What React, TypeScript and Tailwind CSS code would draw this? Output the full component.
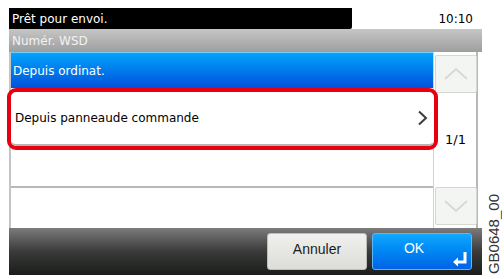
import React from "react";

// scroll arrow inside the side column
const ScrollButton = ({ dir }: { dir: "up" | "down" }) => (
  <div className="flex h-[38px] w-[42px] items-center justify-center rounded-[2px] border border-[#d4d8d4] bg-[#f3f5f3]">
    <svg width="26" height="14" viewBox="0 0 26 14">
      <path
        d={dir === "up" ? "M2 12 L13 2 L24 12" : "M2 2 L13 12 L24 2"}
        fill="none"
        stroke="#d6dad6"
        strokeWidth="2"
      />
    </svg>
  </div>
);

const App = () => {
  const sans = { fontFamily: '"DejaVu Sans", Verdana, sans-serif' };
  const arial = { fontFamily: '"Liberation Sans", Arial, sans-serif' };

  return (
    <div className="flex h-[279px] w-[504px] bg-white pl-[9px] pt-[8px]">
      {/* main panel */}
      <div className="flex w-[473px] flex-col text-[12px]" style={sans}>
        {/* status line */}
        <div className="flex h-[21px]">
          <div className="flex w-[343px] items-center rounded-br-[2px] bg-black pl-[3px] text-white">
            Prêt pour envoi.
          </div>
          <div className="flex flex-1 items-center justify-end pr-[9px] text-black">10:10</div>
        </div>

        {/* title bar */}
        <div className="flex h-[23px] items-center bg-gradient-to-b from-[#c6c6c6] to-[#9e9e9e] pl-[3px] text-[#f2f2f2]">
          Numér. WSD
        </div>

        {/* list + scroll column */}
        <div className="flex h-[176px] w-[469px]">
          <div className="flex w-[424px] flex-col border-l-2 border-[#c4c4c4]">
            <div className="flex h-[36px] items-center border-t border-[#6cd0ff] bg-gradient-to-b from-[#0aa2fb] to-[#0050dc] pl-[2px] text-white">
              Depuis ordinat.
            </div>

            <div className="relative z-10 -ml-[4px] -mr-[5px] flex h-[62px] rounded-[9px] border-[4px] border-[#e8000e] bg-white">
              <div className="flex flex-1 items-center justify-between rounded-[5px] border-b-2 border-[#b4b4b4] pl-[4px] pr-[6px] text-black">
                <span>Depuis panneaude commande</span>
                <svg width="11" height="16" viewBox="0 0 11 16">
                  <path d="M2 1.5 L9 8 L2 14.5" fill="none" stroke="#3c3c3c" strokeWidth="2" />
                </svg>
              </div>
            </div>

            <div className="h-[38px] border-b-2 border-[#b8b8b8]" />
            <div className="flex-1" />
          </div>

          <div className="flex w-[45px] flex-col items-start justify-between border-l border-r-2 border-[#d0d4d0] border-r-[#b8b8b8] pb-[3px] pl-[1px] pt-[3px]">
            <ScrollButton dir="up" />
            <div className="w-[42px] pl-[10px] text-[13px] text-black">1/1</div>
            <ScrollButton dir="down" />
          </div>
        </div>

        {/* bottom bar */}
        <div className="flex h-[47px] items-center justify-end gap-[5px] bg-gradient-to-b from-[#7c7c7c] via-[#3a3b3a] to-[#1a1d1a] pr-[10px]" style={arial}>
          <div className="flex h-[37px] w-[100px] justify-center rounded-[3px] border border-[#bdbdbd] bg-gradient-to-b from-[#f0f0ee] to-[#dcdcd8] pt-[5px] text-[14px] text-[#1c1c1c]">
            Annuler
          </div>
          <div className="relative flex h-[37px] w-[100px] justify-center rounded-[3px] border border-[#5ab8ff] bg-gradient-to-b from-[#14a8ff] to-[#0062e6] pr-[16px] pt-[4px] text-[14px] text-white">
            OK
            <svg className="absolute bottom-[2px] right-[3px]" width="16" height="16" viewBox="0 0 16 16">
              <path d="M13 1 V11 H5" fill="none" stroke="white" strokeWidth="3" />
              <path d="M1 11 L6 6.5 V15.5 Z" fill="white" />
            </svg>
          </div>
        </div>
      </div>

      {/* figure code in the margin */}
      <div className="flex flex-1 flex-col justify-end pb-[5px] pl-[4px]">
        <div className="rotate-180 text-[15px] leading-[15px] text-[#333] [writing-mode:vertical-rl]" style={arial}>
          GB0648_00
        </div>
      </div>
    </div>
  );
};

export default App;
